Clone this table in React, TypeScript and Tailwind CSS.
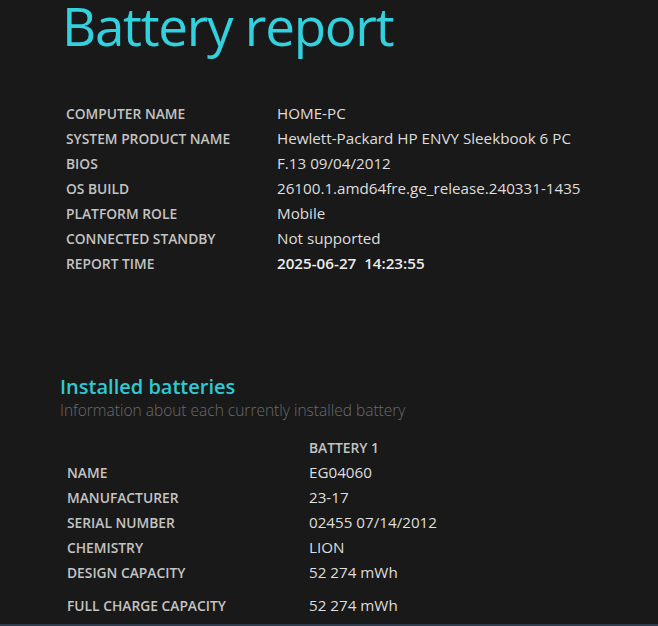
const systemRows: [string, string][] = [
  ["COMPUTER NAME", "HOME-PC"],
  ["SYSTEM PRODUCT NAME", "Hewlett-Packard HP ENVY Sleekbook 6 PC"],
  ["BIOS", "F.13 09/04/2012"],
  ["OS BUILD", "26100.1.amd64fre.ge_release.240331-1435"],
  ["PLATFORM ROLE", "Mobile"],
  ["CONNECTED STANDBY", "Not supported"],
];

const batteryRows: [string, string][] = [
  ["NAME", "EG04060"],
  ["MANUFACTURER", "23-17"],
  ["SERIAL NUMBER", "02455 07/14/2012"],
  ["CHEMISTRY", "LION"],
  ["DESIGN CAPACITY", "52 274 mWh"],
];

const labelCls = "h-[25px] text-[13.8px] leading-[25px] font-semibold text-[#c4c4c4]";
const valueCls = "h-[25px] text-[15.2px] leading-[25px]";

export default function App() {
  return (
    <div
      className="h-[626px] w-[658px] overflow-hidden border-b-2 border-[#2f3a4c] bg-[#191919] text-[#dedede]"
      style={{ fontFamily: '"Open Sans", "Noto Sans", sans-serif' }}
    >
      <h1 className="ml-[62px] text-[53px] leading-[52px] tracking-[-1.3px] text-[#33d0de]">
        Battery report
      </h1>

      <div className="ml-[66px] mt-[49px] grid grid-cols-[211px_1fr]">
        {systemRows.map(([label, value]) => (
          <div key={label} className="contents">
            <div className={labelCls}>{label}</div>
            <div className={valueCls}>{value}</div>
          </div>
        ))}
        <div className={labelCls}>REPORT TIME</div>
        <div className={`${valueCls} font-semibold text-[#ececec]`}>
          2025-06-27&nbsp;&nbsp;14:23:55
        </div>
      </div>

      <section className="ml-[60px] mt-[98px]">
        <h2 className="text-[20px] leading-[26px] font-semibold text-[#2fc9d3]">
          Installed batteries
        </h2>
        <p className="text-[15.5px] leading-[20px] font-light text-[#6b6b6b]">
          Information about each currently installed battery
        </p>
      </section>

      <div className="ml-[67px] mt-[16px] grid grid-cols-[242px_1fr]">
        <div />
        <div className="h-[24px] text-[13.8px] leading-[24px] font-semibold text-[#c4c4c4]">
          BATTERY 1
        </div>
        {batteryRows.map(([label, value]) => (
          <div key={label} className="contents">
            <div className={labelCls}>{label}</div>
            <div className={valueCls}>{value}</div>
          </div>
        ))}
        <div className={`${labelCls} mt-[8px]`}>FULL CHARGE CAPACITY</div>
        <div className={`${valueCls} mt-[8px]`}>52 274 mWh</div>
      </div>
    </div>
  );
}
